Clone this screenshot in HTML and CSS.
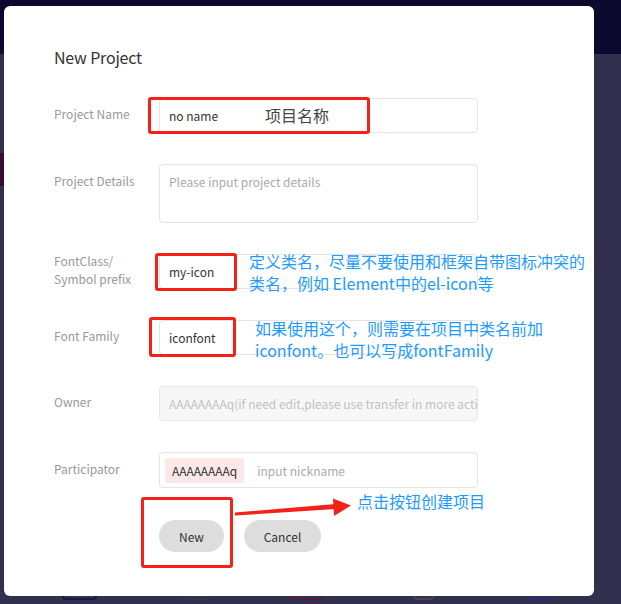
FILE: index.html
```html
<!DOCTYPE html>
<html lang="en">
<head>
<meta charset="utf-8">
<title>New Project</title>
<link rel="stylesheet" href="styles.css">
</head>
<body>
<div class="app">
  <header class="topbar"></header>
  <main class="backdrop">
    <div class="side-item"></div>
    <div class="bottom-row">
      <span class="deco deco-navy"></span>
      <span class="deco deco-teal"></span>
      <span class="deco deco-red"></span>
      <span class="deco deco-wave"></span>
      <span class="deco deco-blue"></span>
    </div>
  </main>
</div>

<section class="modal">
  <h2 class="modal-title">New Project</h2>
  <div class="form">
    <div class="row">
      <div class="label">Project Name</div>
      <div class="input"><span class="value">no name</span></div>
    </div>
    <div class="row">
      <div class="label label-top">Project Details</div>
      <div class="input textarea"><span class="placeholder">Please input project details</span></div>
    </div>
    <div class="row">
      <div class="label">FontClass/<br>Symbol prefix</div>
      <div class="input"><span class="value">my-icon</span></div>
    </div>
    <div class="row">
      <div class="label">Font Family</div>
      <div class="input"><span class="value">iconfont</span></div>
    </div>
    <div class="row">
      <div class="label">Owner</div>
      <div class="input disabled"><span class="disabled-text">AAAAAAAAq(if need edit,please use transfer in more actions)</span></div>
    </div>
    <div class="row">
      <div class="label">Participator</div>
      <div class="input tags"><span class="tag">AAAAAAAAq</span><span class="placeholder">input nickname</span></div>
    </div>
    <div class="actions">
      <button class="btn btn-new">New</button>
      <button class="btn btn-cancel">Cancel</button>
    </div>
  </div>
</section>

<div class="annotations">
  <div class="mark mark-name"></div>
  <div class="mark mark-class"></div>
  <div class="mark mark-family"></div>
  <div class="mark mark-new"></div>
  <div class="note note-name">项目名称</div>
  <div class="note note-blue note-class">定义类名，尽量不要使用和框架自带图标冲突的<br>类名，例如 Element中的el-icon等</div>
  <div class="note note-blue note-family">如果使用这个，则需要在项目中类名前加<br>iconfont。也可以写成fontFamily</div>
  <div class="note note-blue note-new">点击按钮创建项目</div>
  <svg class="arrow" width="621" height="604" viewBox="0 0 621 604">
    <polygon points="235,512.5 235,515.5 336,509 336,504" fill="#f4211a"/>
    <polygon points="333,498.5 351,505.5 334,516" fill="#f4211a"/>
  </svg>
</div>
</body>
</html>
```

FILE: styles.css
```css
* { box-sizing: border-box; }

html, body {
  margin: 0;
  padding: 0;
  width: 621px;
  height: 604px;
  overflow: hidden;
}

body {
  font-family: "Noto Sans CJK SC", "Noto Sans", sans-serif;
  background: #32304f;
  position: relative;
}

.app {
  display: flex;
  flex-direction: column;
  height: 604px;
}

.topbar {
  height: 54px;
  background: #0b0a2e;
  flex: none;
}

.backdrop {
  flex: 1;
  background: #32304f;
  display: flex;
  flex-direction: column;
}

.side-item {
  width: 4px;
  height: 33px;
  margin-top: 99px;
  background: #3a0c30;
}

.bottom-row {
  margin-top: auto;
  display: flex;
  align-items: flex-end;
  height: 12px;
  margin-bottom: 4px;
  padding-left: 62px;
}

.deco {
  display: block;
  border: 2px solid;
  border-top: none;
  border-radius: 0 0 4px 4px;
  height: 10px;
}
.deco-navy { width: 35px; border-color: #1a1846; }
.deco-teal { width: 24px; margin-left: 89px; border-color: #2c3a52; border-width: 1px; }
.deco-red { width: 34px; margin-left: 79px; border-color: #561a3e; }
.deco-wave { width: 23px; margin-left: 89px; border-color: #4a445a; border-radius: 0 0 10px 10px; height: 6px; }
.deco-blue { width: 22px; margin-left: 96px; border-color: #2a2a78; }

.modal {
  position: absolute;
  left: 4px;
  top: 6px;
  width: 590px;
  height: 590px;
  background: #fff;
  border-radius: 6px;
  padding: 41px 50px 0 50px;
}

.modal-title {
  margin: 0;
  font-size: 16px;
  line-height: 20px;
  font-weight: normal;
  color: #333;
  letter-spacing: -0.2px;
}

.form {
  margin-top: 31px;
  display: flex;
  flex-direction: column;
  gap: 31px;
}

.row {
  display: grid;
  grid-template-columns: 105px 319px;
  align-items: center;
}

.label {
  font-size: 12px;
  line-height: 18px;
  color: #999;
  margin-top: -3px;
}

.label-top {
  align-self: start;
  margin-top: 8px;
}

.input {
  height: 35px;
  border: 1px solid #e4e4e4;
  border-radius: 4px;
  padding: 0 9px;
  display: flex;
  align-items: center;
  font-size: 12px;
  color: #333;
  overflow: hidden;
  white-space: nowrap;
}

.textarea {
  height: 59px;
  align-items: flex-start;
  padding-top: 8px;
  line-height: 18px;
}

.placeholder { color: #aaa; }

.disabled {
  background: #f7f7f7;
  border-color: #e8e8e8;
}
.disabled-text { color: #c2c2c2; }

.tags {
  height: 36px;
  padding-left: 5px;
}

.tag {
  background: #fce9e7;
  color: #333;
  height: 25px;
  line-height: 25px;
  padding: 0 7px;
  border-radius: 2px;
  margin-right: 13px;
}

.actions {
  display: flex;
  gap: 20px;
  padding-left: 105px;
  margin-top: 1px;
}

.btn {
  height: 32px;
  border: none;
  border-radius: 16px;
  background: #dedede;
  color: #333;
  font-family: inherit;
  font-size: 12px;
  padding: 0;
}
.btn-new { width: 65px; }
.btn-cancel { width: 77px; }

/* screenshot annotations */
.annotations {
  position: absolute;
  left: 0;
  top: 0;
  width: 621px;
  height: 604px;
  pointer-events: none;
}

.mark {
  position: absolute;
  border: 3px solid #f4211a;
  border-radius: 3px;
}
.mark-name { left: 148px; top: 97px; width: 222px; height: 37px; }
.mark-class { left: 155px; top: 253px; width: 82px; height: 38px; }
.mark-family { left: 149px; top: 317px; width: 87px; height: 40px; }
.mark-new { left: 141px; top: 497px; width: 92px; height: 71px; }

.note {
  position: absolute;
  font-size: 16px;
  line-height: 22px;
  white-space: nowrap;
}
.note-name { left: 265px; top: 104px; color: #444; }
.note-blue { color: #1e9bff; }
.note-class { left: 249px; top: 250px; }
.note-family { left: 255px; top: 317px; }
.note-new { left: 357px; top: 490px; }

.arrow {
  position: absolute;
  left: 0;
  top: 0;
}
```
